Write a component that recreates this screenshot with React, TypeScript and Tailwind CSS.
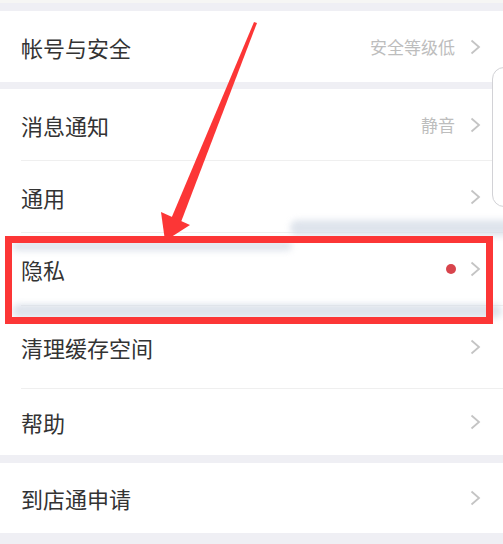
import type { ReactNode } from "react";

function Chevron() {
  return (
    <svg width="11" height="16" viewBox="0 0 11 16" className="shrink-0">
      <path d="M1.5 1.5 L9 8 L1.5 14.5" fill="none" stroke="#c4c4c4" strokeWidth="1.8" />
    </svg>
  );
}

function Row({
  label,
  right,
  h,
  divider = false,
}: {
  label: string;
  right?: ReactNode;
  h: string;
  divider?: boolean;
}) {
  return (
    <div className={`${h} flex flex-col bg-white`}>
      <div className="flex-1 flex items-center pl-[21px] pr-[22px]">
        <span className="flex-1 text-[22px] leading-none text-[#333333]">{label}</span>
        {right}
        <Chevron />
      </div>
      {divider && <div className="ml-[21px] h-px bg-[#efefef]" />}
    </div>
  );
}

export default function App() {
  return (
    <div
      className="relative w-[503px] h-[544px] overflow-hidden bg-white"
      style={{ fontFamily: '"Noto Sans CJK SC", "Noto Sans", sans-serif' }}
    >
      <div className="h-[3px] bg-[#f6f6f4]" />
      <div className="h-[8px] bg-[#efeff4]" />
      <Row
        label="帐号与安全"
        h="h-[71px]"
        right={<span className="mr-[15px] text-[17px] text-[#bdbdbd]">安全等级低</span>}
      />
      <div className="h-[7px] bg-[#efeff4]" />
      <Row
        label="消息通知"
        h="h-[72px]"
        divider
        right={<span className="mr-[15px] text-[17px] text-[#bdbdbd]">静音</span>}
      />
      <Row label="通用" h="h-[72px]" divider />
      <Row
        label="隐私"
        h="h-[73px]"
        divider
        right={<span className="mr-[14px] w-[10px] h-[10px] rounded-full bg-[#d8444c]" />}
      />
      <Row label="清理缓存空间" h="h-[83px]" divider />
      <Row label="帮助" h="h-[66px]" />
      <div className="h-[8px] bg-[#efeff4]" />
      <Row label="到店通申请" h="h-[70px]" />
      <div className="h-[11px] bg-[#efeff4]" />

      {/* smudges from the screenshot */}
      <div className="absolute left-[290px] top-[220px] w-[240px] h-[16px] rounded-full bg-[#d4dbe6] opacity-75 blur-[3px]" />
      <div className="absolute left-[12px] top-[241px] w-[280px] h-[10px] rounded-full bg-[#d4dbe6] opacity-70 blur-[3px]" />
      <div className="absolute left-[12px] top-[304px] w-[490px] h-[14px] rounded-full bg-[#d0d8e4] opacity-70 blur-[3px]" />

      {/* edge of a floating panel */}
      <div className="absolute left-[492px] top-[67px] w-[30px] h-[140px] rounded-[12px] border border-[#d2d2d6] bg-white" />

      {/* annotation box */}
      <div className="absolute left-[5px] top-[236px] w-[488px] h-[88px] border-[7px] border-[#fc3636]" />

      {/* annotation arrow */}
      <svg className="absolute left-0 top-0" width="503" height="544" viewBox="0 0 503 544">
        <polygon points="254,22 257,23 181,222 171,219" fill="#fc3636" />
        <polygon points="161,212 190,225 165,241" fill="#fc3636" />
      </svg>
    </div>
  );
}
